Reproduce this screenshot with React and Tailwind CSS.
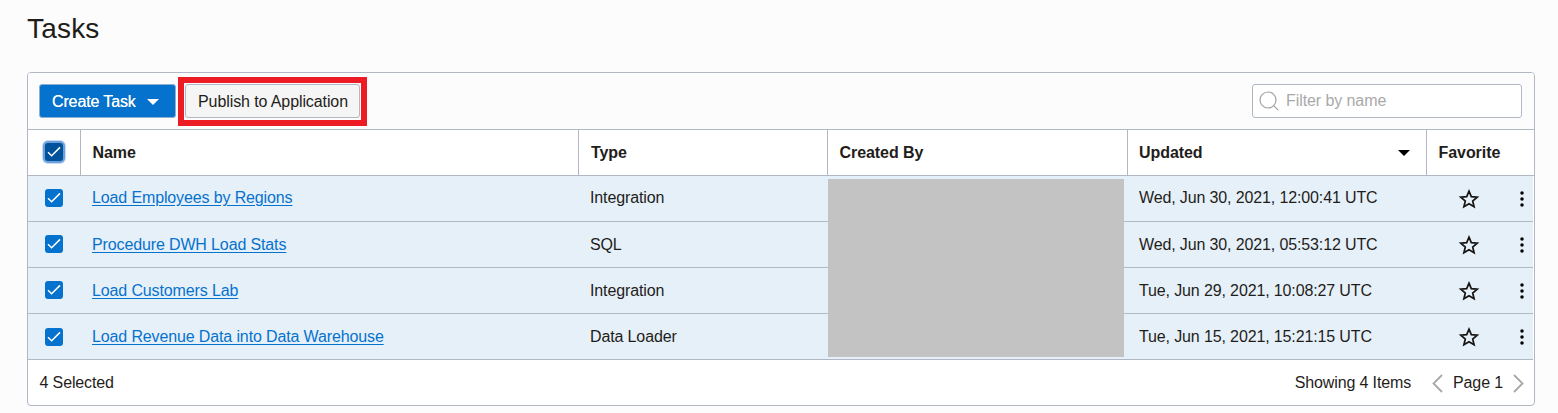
import React from "react";

const rows = [
  { name: "Load Employees by Regions", type: "Integration", updated: "Wed, Jun 30, 2021, 12:00:41 UTC", text: "pb-px", box: "pb-px" },
  { name: "Procedure DWH Load Stats", type: "SQL", updated: "Wed, Jun 30, 2021, 05:53:12 UTC", text: "pt-px", box: "pb-px" },
  { name: "Load Customers Lab", type: "Integration", updated: "Tue, Jun 29, 2021, 10:08:27 UTC", text: "pt-px", box: "pb-px" },
  { name: "Load Revenue Data into Data Warehouse", type: "Data Loader", updated: "Tue, Jun 15, 2021, 15:21:15 UTC", text: "pt-px", box: "pt-px" },
];

const Check = ({ className }) => (
  <span className={`block h-[18px] w-[18px] rounded-[3px] ${className}`}>
    <svg width="18" height="18" viewBox="0 0 18 18" fill="none" stroke="#fff" strokeWidth="1.5">
      <path d="M3 9.2 6.6 12.8 15 4.4" />
    </svg>
  </span>
);

const Star = () => (
  <svg width="22" height="20" viewBox="0 0 22 20" fill="none" stroke="#161513" strokeWidth="1.7">
    <path d="M11 2.2 13.3 7.7 19.2 8.2 14.7 12 16.1 17.7 11 14.7 5.9 17.7 7.3 12 2.8 8.2 8.7 7.7Z" />
  </svg>
);

const Kebab = () => (
  <svg width="6" height="18" viewBox="0 0 6 18" fill="#000">
    <circle cx="3" cy="3" r="1.75" />
    <circle cx="3" cy="9" r="1.75" />
    <circle cx="3" cy="15" r="1.75" />
  </svg>
);

const grid = "grid grid-cols-[53px_498px_249px_300px_299px_106px]";

export default function App() {
  return (
    <div className="h-[413px] w-[1558px] overflow-hidden bg-[#fcfcfc] pl-[27px] font-['Liberation_Sans',Arial,sans-serif] text-[16px] leading-[20px] tracking-[-0.13px] text-[#1f1d1a]">
      <h1 className="flex h-[72px] items-start pt-[13px] text-[28px] leading-[32px] tracking-[0.2px]">Tasks</h1>
      <div className="h-[334px] w-[1508px] overflow-hidden rounded-[4px] border border-[#b1b8c4] bg-white">
        <div className="flex h-[57px] items-start justify-between border-b border-[#b1b8c4] bg-[#fcfcfc] pr-[12px] pl-[11px]">
          <div className="flex">
            <button className="mt-[11px] flex h-[34px] w-[137px] items-center rounded-[3px] border border-[#8eaed0] bg-[#0572ce] pt-px pl-[12px] text-white">
              <span className="w-[84px] text-left whitespace-nowrap [text-shadow:0_0_0.6px_#fff]">Create Task</span>
              <svg className="ml-[11px]" width="12" height="6" viewBox="0 0 12 6" fill="#fff"><path d="M0 0H12L6 6Z" /></svg>
            </button>
            <div className="mt-[4px] ml-[2px] flex h-[49px] w-[189px] border-[6px] border-[#ed1c24]">
              <button className="mt-px ml-px h-[34px] w-[175px] rounded-[3px] border border-[#b1b8c4] bg-[#f5f5f5] pt-[2px] pl-px tracking-[-0.1px] whitespace-nowrap">Publish to Application</button>
            </div>
          </div>
          <div className="mt-[11px] flex h-[34px] w-[270px] items-center rounded-[3px] border border-[#b1b8c4] bg-white pl-[6px] text-[#a9a9a9]">
            <svg width="20" height="20" viewBox="0 0 20 20" fill="none" stroke="#a3a3a3" strokeWidth="1.2">
              <circle cx="9" cy="9" r="8" /><path d="m14.7 14.7 4.5 4.5" />
            </svg>
            <span className="ml-[7px] tracking-[-0.08px]">Filter by name</span>
          </div>
        </div>

        <div className={`${grid} h-[46px] border-b border-[#b1b8c4] font-bold tracking-[-0.06px]`}>
          <div className="flex items-center justify-end border-r border-[#b1b8c4] pr-[17px] pb-px">
            <Check className="bg-[#00539b] shadow-[0_0_0_2px_#6ca0dc,0_0_0_3px_#c9dcf3]" />
          </div>
          <div className="flex items-center border-r border-[#b1b8c4] pl-[11.5px]">Name</div>
          <div className="flex items-center border-r border-[#b1b8c4] pl-[12px]">Type</div>
          <div className="flex items-center border-r border-[#b1b8c4] pl-[11.5px]">Created By</div>
          <div className="flex items-center justify-between border-r border-[#b1b8c4] pr-[16.5px] pl-[11px]">
            Updated
            <svg width="12" height="6" viewBox="0 0 12 6" fill="#000"><path d="M0 0H12L6 6Z" /></svg>
          </div>
          <div className="flex items-center pl-[11.5px]">Favorite</div>
        </div>

        <div className="relative mr-px">
          {rows.map((r) => (
            <div key={r.name} className={`${grid} h-[46px] border-b border-[#b1b8c4] bg-[#e6f0f9]`}>
              <div className={`flex items-center pl-[17px] ${r.box}`}><Check className="bg-[#0572ce]" /></div>
              <div className={`flex items-center pl-[11px] ${r.text}`}>
                <a className="text-[#0572ce] underline underline-offset-2">{r.name}</a>
              </div>
              <div className={`flex items-center pl-[11px] ${r.text}`}>{r.type}</div>
              <div />
              <div className={`flex items-center pl-[11px] ${r.text}`}>{r.updated}</div>
              <div className="flex items-center justify-between pr-[8px] pl-[30.5px]"><Star /><Kebab /></div>
            </div>
          ))}
          <div className="absolute top-[3px] left-[800px] h-[178px] w-[296px] bg-[#c3c3c3]" />
        </div>

        <div className="flex h-[45px] items-center justify-between pr-[10px] pl-[11.5px]">
          <span>4 Selected</span>
          <div className="flex items-center">
            <span>Showing 4 Items</span>
            <svg className="mt-[2px] ml-[21px]" width="11" height="19" viewBox="0 0 11 19" fill="none" stroke="#a8a8a8" strokeWidth="1.8"><path d="M10 1 1.5 9.5 10 18" /></svg>
            <span className="ml-[10px]">Page 1</span>
            <svg className="mt-[2px] ml-[10px]" width="11" height="19" viewBox="0 0 11 19" fill="none" stroke="#a8a8a8" strokeWidth="1.8"><path d="M1 1 9.5 9.5 1 18" /></svg>
          </div>
        </div>
      </div>
    </div>
  );
}
